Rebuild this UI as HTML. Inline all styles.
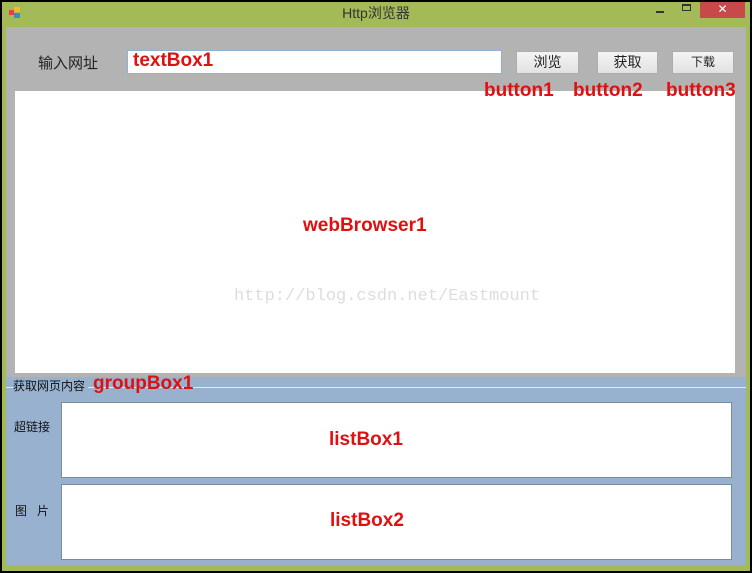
<!DOCTYPE html>
<html><head><meta charset="utf-8"><style>
*{margin:0;padding:0;box-sizing:border-box}
body{width:752px;height:573px;background:#000;position:relative;overflow:hidden;font-family:"Liberation Sans","Noto Sans CJK SC",sans-serif}
.a{position:absolute}
.r{color:#e01010;font-weight:bold;font-family:"Liberation Sans","Noto Sans CJK SC",sans-serif}
.btn{position:absolute;background:linear-gradient(#f4f4f4,#e2e2e2);border:1px solid #adadad;font-size:14px;text-align:center;line-height:20px;color:#222}
</style></head><body>
<div class="a" style="left:2px;top:2px;width:748px;height:569px;background:#a4ba57"></div>
<div class="a" style="left:9px;top:7px;width:12px;height:12px">
<div class="a" style="left:0;top:3px;width:5px;height:5px;background:#d44"></div>
<div class="a" style="left:5px;top:0;width:6px;height:5px;background:#eb3"></div>
<div class="a" style="left:5px;top:6px;width:6px;height:5px;background:#48c"></div></div>
<div class="a" style="left:0;top:3px;width:752px;text-align:center;font-size:14px;color:#333">Http浏览器</div>
<div class="a" style="left:656px;top:11px;width:8px;height:2px;background:#333"></div>
<div class="a" style="left:682px;top:4px;width:9px;height:7px;border:1px solid #333;border-top-width:2px"></div>
<div class="a" style="left:700px;top:2px;width:45px;height:16px;background:#c9484a;color:#fff;text-align:center;font-size:12px;line-height:15px">✕</div>
<div class="a" style="left:6px;top:27px;width:740px;height:538px;background:#b3b3b3"></div>
<div class="a" style="left:38px;top:52px;font-size:15px;color:#222">输入网址</div>
<div class="a" style="left:127px;top:50px;width:375px;height:24px;background:#fff;border:1px solid #8fb3d6"></div>
<div class="a r" style="left:133px;top:50px;font-size:19px">textBox1</div>
<div class="btn" style="left:516px;top:51px;width:63px;height:23px">浏览</div>
<div class="btn" style="left:597px;top:51px;width:61px;height:23px">获取</div>
<div class="btn" style="left:672px;top:51px;width:62px;height:23px;font-size:12px">下载</div>
<div class="a" style="left:15px;top:91px;width:720px;height:282px;background:#fff"></div>
<div class="a r" style="left:484px;top:80px;font-size:19px">button1</div>
<div class="a r" style="left:573px;top:80px;font-size:19px">button2</div>
<div class="a r" style="left:666px;top:80px;font-size:19px">button3</div>
<div class="a r" style="left:303px;top:215px;font-size:19px">webBrowser1</div>
<div class="a" style="left:234px;top:287px;font-size:17px;color:#ddd;font-family:'Liberation Mono',monospace">http://blog.csdn.net/Eastmount</div>
<div class="a" style="left:6px;top:377px;width:740px;height:188px;background:#97b1cf"></div>
<div class="a" style="left:6px;top:387px;width:740px;height:1px;background:#e0e8f0"></div>
<div class="a" style="left:13px;top:377px;font-size:12px;color:#111;background:#97b1cf;padding-right:3px">获取网页内容</div>
<div class="a r" style="left:93px;top:373px;font-size:19px">groupBox1</div>
<div class="a" style="left:14px;top:418px;font-size:12px;color:#111">超链接</div>
<div class="a" style="left:15px;top:502px;font-size:12px;color:#111">图&nbsp;&nbsp;&nbsp;片</div>
<div class="a" style="left:61px;top:402px;width:671px;height:76px;background:#fff;border:1px solid #7a8aa0"></div>
<div class="a" style="left:61px;top:484px;width:671px;height:76px;background:#fff;border:1px solid #7a8aa0"></div>
<div class="a r" style="left:329px;top:429px;font-size:19px">listBox1</div>
<div class="a r" style="left:330px;top:510px;font-size:19px">listBox2</div>
</body></html>
